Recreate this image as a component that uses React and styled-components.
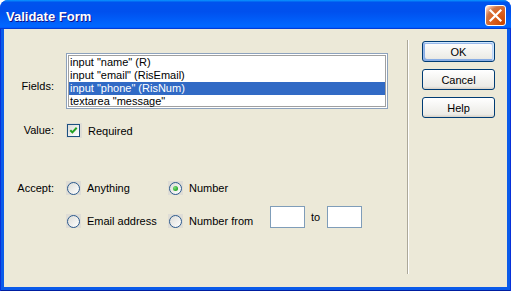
import React from "react"
import styled, { createGlobalStyle } from "styled-components"

const GlobalStyle = createGlobalStyle`
  html, body {
    margin: 0;
    padding: 0;
    background: #fff;
  }
  body {
    font-family: "Liberation Sans", Arial, sans-serif;
    font-size: 11px;
    color: #000;
  }
`

const fields = [
  'input "name" (R)',
  'input "email" (RisEmail)',
  'input "phone" (RisNum)',
  'textarea "message"',
]

const App = () => {
  return (
    <>
      <GlobalStyle />
      <Window>
        <TitleBar>
          <Title>Validate Form</Title>
          <CloseButton aria-label="Close">
            <svg width="19" height="19" viewBox="0 0 19 19">
              <path
                d="M4.5 4.5 L14.5 14.5 M14.5 4.5 L4.5 14.5"
                stroke="#fff"
                strokeWidth="2.2"
                strokeLinecap="square"
              />
            </svg>
          </CloseButton>
        </TitleBar>
        <Frame>
          <Client>
            <FormArea>
              <FieldRow>
                <Label $lh={13} $pad={27}>Fields:</Label>
                <ListBox>
                  {fields.map((f, i) => (
                    <ListItem key={f} $selected={i === 2}>
                      {f}
                    </ListItem>
                  ))}
                </ListBox>
              </FieldRow>

              <FieldRow $top={14}>
                <Label $lh={15}>Value:</Label>
                <CheckOption>
                  <ControlBg $w={16} $h={15}>
                    <CheckBox>
                      <svg width="11" height="11" viewBox="0 0 11 11">
                        <path
                          d="M2.3 5.2 L4.4 7.4 L8.7 2.8"
                          stroke="#21A121"
                          strokeWidth="2"
                          fill="none"
                        />
                      </svg>
                    </CheckBox>
                  </ControlBg>
                  <span>Required</span>
                </CheckOption>
              </FieldRow>

              <FieldRow $top={39}>
                <Label $lh={22}>Accept:</Label>
                <RadioGrid>
                  <RadioOption>
                    <ControlBg $w={15} $h={14}>
                      <Radio />
                    </ControlBg>
                    <span>Anything</span>
                  </RadioOption>
                  <RadioOption>
                    <ControlBg $w={15} $h={14}>
                      <Radio $checked />
                    </ControlBg>
                    <span>Number</span>
                  </RadioOption>
                  <div />
                  <RadioOption>
                    <ControlBg $w={15} $h={14}>
                      <Radio />
                    </ControlBg>
                    <span>Email address</span>
                  </RadioOption>
                  <RadioOption>
                    <ControlBg $w={15} $h={14}>
                      <Radio />
                    </ControlBg>
                    <span>Number from</span>
                  </RadioOption>
                  <RangeGroup>
                    <TextBox />
                    <To>to</To>
                    <TextBox />
                  </RangeGroup>
                </RadioGrid>
              </FieldRow>
            </FormArea>

            <Separator />

            <ButtonColumn>
              <Button $default>OK</Button>
              <Button>Cancel</Button>
              <Button>Help</Button>
            </ButtonColumn>
          </Client>
        </Frame>
      </Window>
    </>
  )
}

const Window = styled.div`
  width: 511px;
  height: 291px;
  display: flex;
  flex-direction: column;
  border-radius: 8px 8px 0 0;
  overflow: hidden;
  background: #0a5bea;
`

const TitleBar = styled.div`
  height: 29px;
  flex-shrink: 0;
  box-sizing: border-box;
  display: flex;
  align-items: center;
  justify-content: space-between;
  padding: 2px 5px 0 6px;
  background: linear-gradient(
    180deg,
    #0997ff,
    #0053ee 8%,
    #0050ee 40%,
    #0066ff 88%,
    #0066ff 93%,
    #005bff 95%,
    #003dd7 96%,
    #003dd7
  );
`

const Title = styled.span`
  padding-top: 2px;
  font-family: "Liberation Sans", Arial, sans-serif;
  font-weight: bold;
  font-size: 13px;
  color: #fff;
  text-shadow: 1px 1px #0f1089;
`

const CloseButton = styled.button`
  width: 21px;
  height: 21px;
  box-sizing: border-box;
  padding: 0;
  margin: 0;
  border: 1px solid #fff;
  border-radius: 3px;
  display: flex;
  align-items: center;
  justify-content: center;
  background: radial-gradient(
    circle at 90% 90%,
    #cc4600 0,
    #dc6527 55%,
    #cd7546 70%,
    #ffccb2 90%,
    #fff 100%
  );
`

const Frame = styled.div`
  flex: 1;
  display: flex;
  padding: 0 4px 4px;
  box-shadow: inset 1px 0 #0831d9, inset -1px 0 #0831d9, inset 0 -1px #001ea0;
`

const Client = styled.div`
  flex: 1;
  display: flex;
  background: #ece9d8;
`

const FormArea = styled.div`
  width: 403px;
  flex-shrink: 0;
  box-sizing: border-box;
  padding-top: 24px;
  display: flex;
  flex-direction: column;
`

const FieldRow = styled.div`
  display: flex;
  align-items: flex-start;
  gap: 12px;
  margin-top: ${({ $top }) => $top || 0}px;
`

const Label = styled.div`
  width: 50px;
  flex-shrink: 0;
  text-align: right;
  line-height: ${({ $lh }) => $lh}px;
  padding-top: ${({ $pad }) => $pad || 0}px;
`

const ListBox = styled.div`
  width: 322px;
  height: 56px;
  box-sizing: border-box;
  overflow: hidden;
  padding: 2px 2px 0;
  background: #fff;
  border: 1px solid #8da2bd;
  box-shadow: inset 0 0 0 1px #fff, inset 0 0 0 2px #a0a0a0;
`

const ListItem = styled.div`
  height: 13px;
  line-height: 13px;
  padding-left: 1px;
  white-space: nowrap;
  background: ${({ $selected }) => ($selected ? "#316ac5" : "transparent")};
  color: ${({ $selected }) => ($selected ? "#fff" : "#000")};
`

const CheckOption = styled.div`
  display: flex;
  align-items: center;
  gap: 6px;
  height: 15px;
`

const ControlBg = styled.div`
  width: ${({ $w }) => $w}px;
  height: ${({ $h }) => $h}px;
  box-sizing: border-box;
  padding-left: 1px;
  display: flex;
  align-items: center;
  background: #dfddd6;
`

const CheckBox = styled.div`
  width: 13px;
  height: 13px;
  box-sizing: border-box;
  border: 1px solid #1c5180;
  background: linear-gradient(135deg, #dcdcd7, #fff);
  display: flex;
`

const RadioGrid = styled.div`
  display: grid;
  grid-template-columns: 102px 102px auto;
  grid-template-rows: 22px 22px;
  row-gap: 11px;
  align-items: center;
`

const RadioOption = styled.div`
  display: flex;
  align-items: center;
  gap: 6px;
  height: 22px;
  white-space: nowrap;
`

const Radio = styled.div`
  width: 13px;
  height: 13px;
  box-sizing: border-box;
  border-radius: 50%;
  border: 1px solid #2c5a8c;
  background: linear-gradient(135deg, #dcdcd7, #fff);
  display: flex;
  align-items: center;
  justify-content: center;

  &::after {
    content: "";
    display: ${({ $checked }) => ($checked ? "block" : "none")};
    width: 5px;
    height: 5px;
    border-radius: 50%;
    background: radial-gradient(circle at 35% 35%, #7ee07b, #21a121 75%);
  }
`

const RangeGroup = styled.div`
  display: flex;
  align-items: center;
  align-self: start;
  margin-top: -4px;
`

const TextBox = styled.input`
  width: 35px;
  height: 22px;
  box-sizing: border-box;
  margin: 0;
  padding: 0 2px;
  border: 1px solid #7f9db9;
  background: #fff;
  font: inherit;
`

const To = styled.span`
  margin: 0 7px 0 6px;
`

const Separator = styled.div`
  width: 0;
  border-left: 1px solid #aca899;
  border-right: 1px solid #fff;
  margin: 11px 0 13px;
`

const ButtonColumn = styled.div`
  display: flex;
  flex-direction: column;
  gap: 7px;
  padding: 12px 12px 0 13px;
`

const Button = styled.button`
  width: 73px;
  height: 21px;
  box-sizing: border-box;
  margin: 0;
  padding: 0;
  font: inherit;
  font-family: "Liberation Sans", Arial, sans-serif;
  font-size: 11px;
  color: #000;
  border: 1px solid #003c74;
  border-radius: 3px;
  background: linear-gradient(180deg, #fff, #ecebe6 86%, #d6d0c5);
  box-shadow: ${({ $default }) =>
    $default
      ? "inset -1px 1px #cee7ff, inset 1px 2px #98b8ea, inset -2px 2px #bcd4f6, inset 1px -1px #89ade4, inset 2px -2px #89ade4"
      : "none"};
`

export default App
